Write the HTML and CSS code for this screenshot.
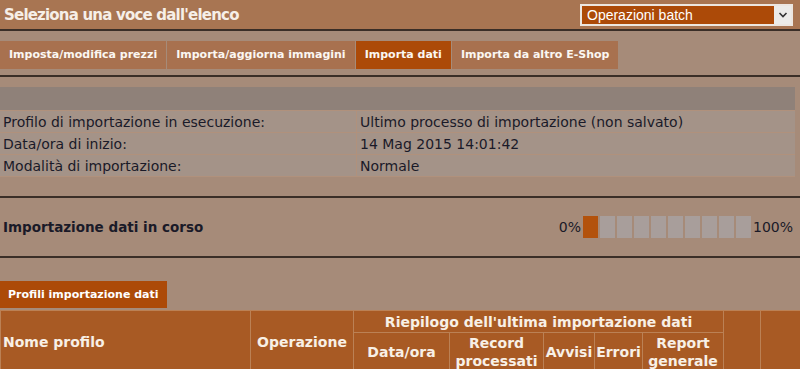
FILE: index.html
```html
<!DOCTYPE html>
<html lang="it">
<head>
    <meta charset="UTF-8">
    <title>Operazioni batch</title>
    <link rel="stylesheet" href="styles.css">
</head>
<body>
    <div class="topbar">
        <h1>Seleziona una voce dall'elenco</h1>
        <div class="select">
            <span>Operazioni batch</span>
            <span class="select-arrow">
                <svg width="10" height="8" viewBox="0 0 10 8"><path d="M1.5 2 L5 5.5 L8.5 2" fill="none" stroke="#333" stroke-width="1.6"/></svg>
            </span>
        </div>
    </div>
    <hr class="sep">

    <div class="tabs">
        <div class="tab">Imposta/modifica prezzi</div>
        <div class="tab">Importa/aggiorna immagini</div>
        <div class="tab active">Importa dati</div>
        <div class="tab">Importa da altro E-Shop</div>
    </div>
    <hr class="sep">

    <table class="info">
        <tr class="band"><td colspan="2"></td></tr>
        <tr>
            <td class="label">Profilo di importazione in esecuzione:</td>
            <td>Ultimo processo di importazione (non salvato)</td>
        </tr>
        <tr>
            <td class="label">Data/ora di inizio:</td>
            <td>14 Mag 2015 14:01:42</td>
        </tr>
        <tr>
            <td class="label">Modalità di importazione:</td>
            <td>Normale</td>
        </tr>
    </table>
    <hr class="sep">

    <div class="progress-row">
        <h2>Importazione dati in corso</h2>
        <div class="progress">
            <span>0%</span>
            <div class="blocks">
                <i class="done"></i><i></i><i></i><i></i><i></i><i></i><i></i><i></i><i></i><i></i>
            </div>
            <span>100%</span>
        </div>
    </div>
    <hr class="sep">

    <div class="btn">Profili importazione dati</div>

    <table class="profili">
        <colgroup>
            <col style="width:250px"><col style="width:103px"><col style="width:96px"><col style="width:94px">
            <col style="width:51px"><col style="width:48px"><col style="width:81px"><col style="width:37px"><col style="width:40px">
        </colgroup>
        <thead>
            <tr>
                <th rowspan="2" class="left">Nome profilo</th>
                <th rowspan="2">Operazione</th>
                <th colspan="5" class="top">Riepilogo dell'ultima importazione dati</th>
                <th rowspan="2"></th>
                <th rowspan="2"></th>
            </tr>
            <tr>
                <th class="sub">Data/ora</th>
                <th class="sub">Record processati</th>
                <th class="sub">Avvisi</th>
                <th class="sub">Errori</th>
                <th class="sub">Report generale</th>
            </tr>
        </thead>
    </table>
</body>
</html>
```

FILE: styles.css
```css
body {
    margin: 0;
    background: #a68b79;
    font-family: "DejaVu Sans", Verdana, sans-serif;
    color: #1a1a28;
    overflow: hidden;
}

.topbar {
    height: 29px;
    background: #a87552;
    display: flex;
    align-items: center;
    justify-content: space-between;
    padding: 0 7px 0 4px;
}

.topbar h1 {
    margin: 0;
    font-size: 15px;
    letter-spacing: -0.8px;
    color: #f6efe8;
}

.select {
    width: 204px;
    height: 18px;
    border: 2px solid #ece6e0;
    background: #ac4a08;
    display: flex;
    align-items: center;
    justify-content: space-between;
    color: #fff;
    font-family: "Liberation Sans", Arial, sans-serif;
    font-size: 14px;
    padding-left: 5px;
    margin-top: 1px;
}

.select-arrow {
    width: 17px;
    height: 18px;
    background: #ecebe8;
    display: flex;
    align-items: center;
    justify-content: center;
}

.sep {
    margin: 0;
    border: 0;
    height: 2px;
    background: #3a2e27;
}

.tabs {
    display: flex;
    gap: 1px;
    margin: 10px 0 6px;
}

.tab {
    height: 28px;
    line-height: 28px;
    padding: 0 9px;
    background: #a8714f;
    color: #fbf7f2;
    font-size: 11px;
    font-weight: bold;
}

.tab.active {
    background: #ac4a08;
}

.info {
    width: 795px;
    margin: 10px 0 19px;
    border-collapse: collapse;
    font-size: 14px;
}

.info td {
    height: 21px;
    padding: 0 3px;
    background: #a49388;
    border: 1px solid #b0917c;
    border-left: 0;
    border-right: 0;
}

.info td.label {
    width: 350px;
    border-right: 1px solid #b0917c;
}

.info .band td {
    background: #8f8179;
    height: 23px;
    border-top: 0;
}

.progress-row {
    height: 58px;
    display: flex;
    align-items: center;
    justify-content: space-between;
    padding: 0 7px 0 3px;
}

.progress-row h2 {
    margin: 0;
    font-size: 13.5px;
}

.progress {
    display: flex;
    align-items: center;
    gap: 2px;
    font-size: 14px;
}

.blocks {
    display: flex;
    gap: 2px;
}

.blocks i {
    width: 15px;
    height: 22px;
    background: #a89e9b;
}

.blocks i.done {
    background: #b3520c;
}

.btn {
    display: inline-block;
    margin-top: 23px;
    height: 27px;
    line-height: 27px;
    padding: 0 8px;
    background: #ac4a08;
    color: #fff;
    font-size: 11px;
    font-weight: bold;
}

.profili {
    margin-top: 2px;
    width: 800px;
    table-layout: fixed;
    border-collapse: collapse;
}

.profili th {
    background: #a85a24;
    color: #f8f0e6;
    border: 1px solid #bb8155;
    font-size: 14px;
    line-height: 18px;
    padding: 0 2px;
}

.profili th.top {
    height: 21px;
}

.profili th.sub {
    padding: 1px 1px 2px;
}

.profili th.left {
    text-align: left;
}
```
